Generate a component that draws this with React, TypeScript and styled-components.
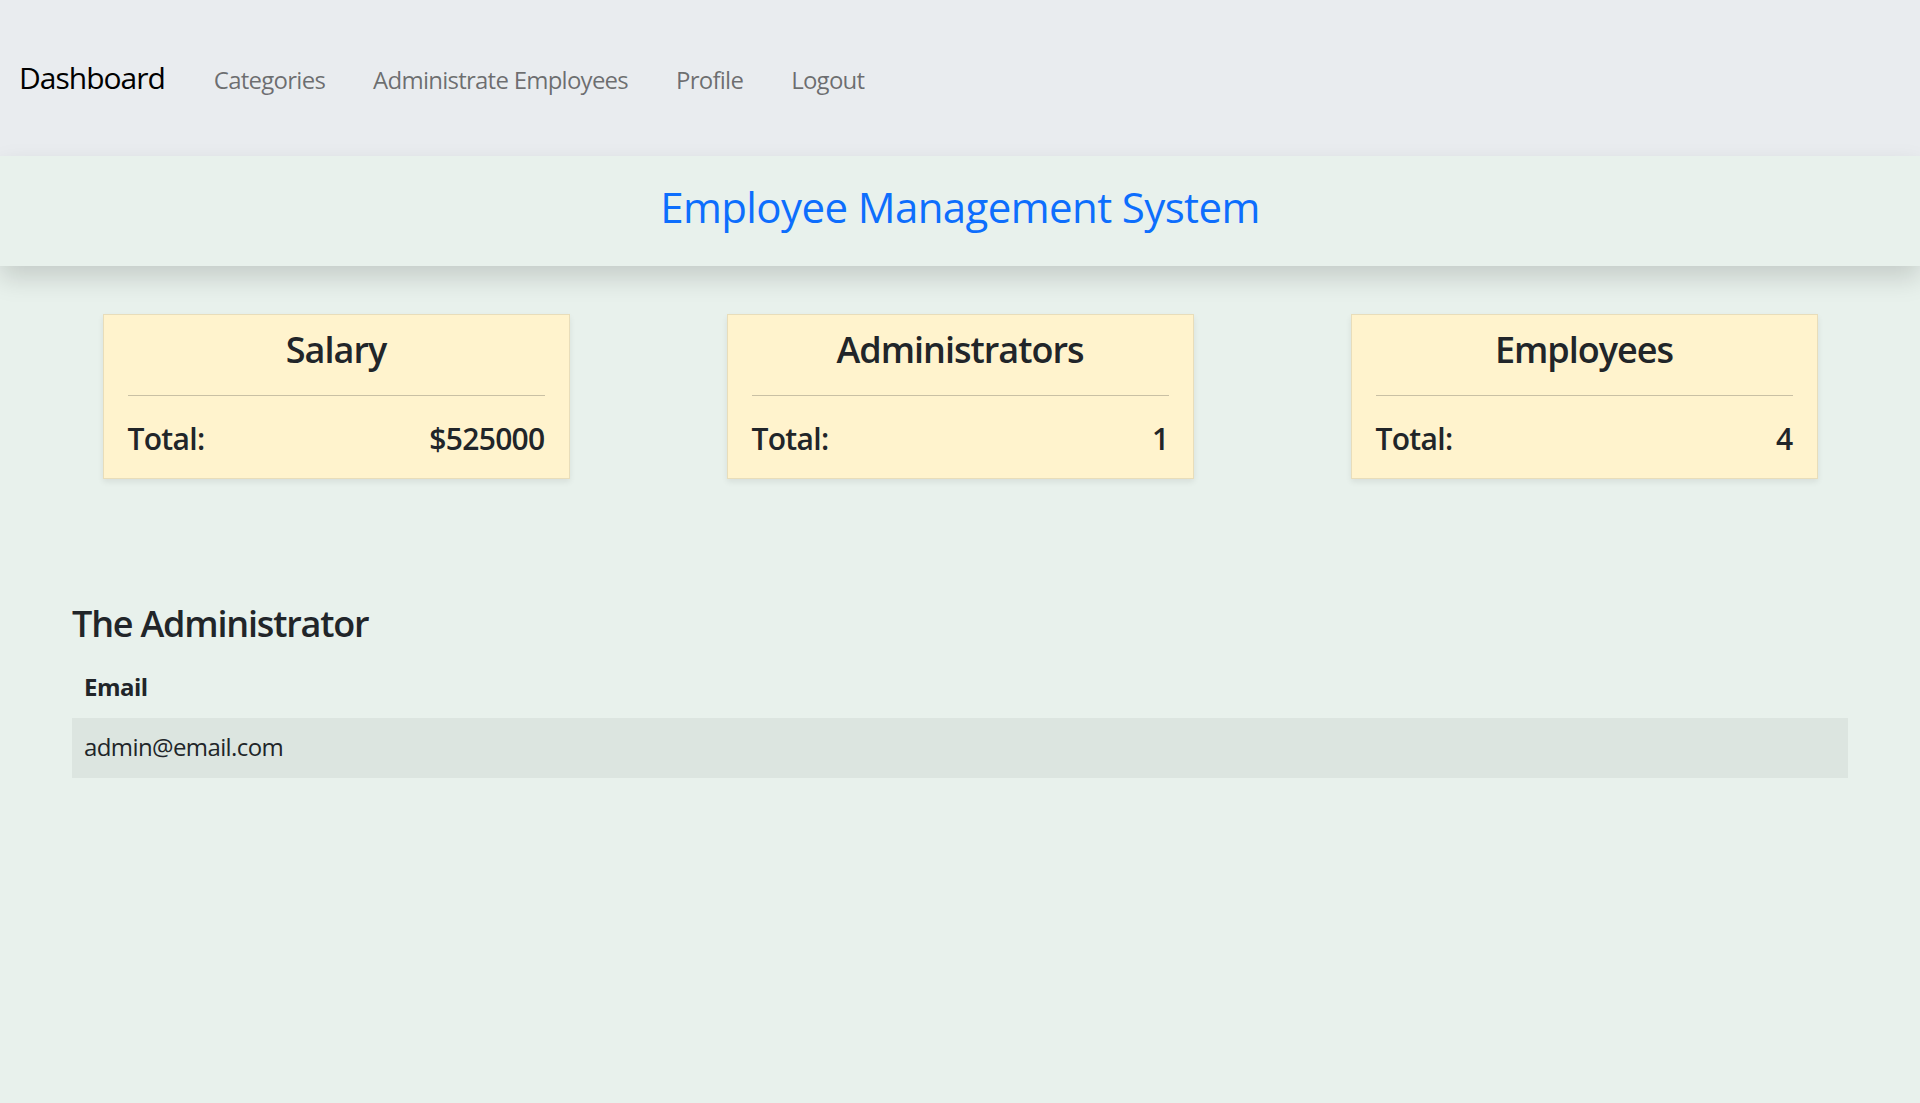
import React from 'react';
import styled, { createGlobalStyle } from 'styled-components';

const GlobalStyle = createGlobalStyle`
  * { box-sizing: border-box; }
  html, body { margin: 0; padding: 0; }
  body {
    background: #e8f1ec;
    font-family: "Open Sans", "Noto Sans", sans-serif;
    color: #212529;
    min-height: 100vh;
  }
`;

const NavBar = styled.nav`
  height: 156px;
  background: #e9ecef;
  display: flex;
  align-items: center;
  padding: 1px 19px 0;
`;

const NavList = styled.div`
  display: flex;
  align-items: baseline;
  gap: 48px;
`;

const Brand = styled.a`
  font-size: 30px;
  line-height: 36px;
  letter-spacing: -1px;
  color: #000;
  text-decoration: none;
  margin-right: 1px;
`;

const NavLink = styled.a`
  font-size: 24px;
  line-height: 36px;
  letter-spacing: -0.75px;
  color: rgba(0, 0, 0, 0.55);
  text-decoration: none;
`;

const Hero = styled.header`
  position: relative;
  z-index: 1;
  height: 110px;
  background: #e8f1ec;
  box-shadow: 0 12px 24px rgba(0, 0, 0, 0.15);
  display: flex;
  justify-content: center;
  align-items: flex-start;
  padding-top: 26px;
`;

const Title = styled.h1`
  margin: 0;
  font-size: 42px;
  line-height: 50px;
  font-weight: 500;
  letter-spacing: -0.6px;
  color: #0d6efd;
`;

const CardRow = styled.section`
  display: flex;
  justify-content: space-around;
  padding: 0 24px;
  margin-top: 48px;
`;

const Card = styled.div`
  width: 467px;
  background: #fff3cd;
  border: 1px solid rgba(0, 0, 0, 0.09);
  box-shadow: 0 3px 6px rgba(0, 0, 0, 0.075);
  padding: 13px 24px 21px;
  display: flex;
  flex-direction: column;
`;

const CardTitle = styled.h4`
  margin: 0;
  text-align: center;
  font-size: 36px;
  line-height: 44px;
  font-weight: 550;
  letter-spacing: -1px;
`;

const Rule = styled.hr`
  margin: 23px 0 25px;
  border: 0;
  border-top: 1px solid #c9c0a4;
  height: 0;
`;

const TotalRow = styled.div`
  display: flex;
  justify-content: space-between;
  font-size: 30px;
  line-height: 36px;
  font-weight: 550;
  letter-spacing: -0.7px;
`;

const AdminSection = styled.section`
  padding: 0 72px;
  margin-top: 123px;
`;

const SectionTitle = styled.h3`
  margin: 0 0 12px;
  font-size: 36px;
  line-height: 43px;
  font-weight: 550;
  letter-spacing: -1.2px;
`;

const Table = styled.table`
  width: 100%;
  border-collapse: collapse;
  font-size: 24px;
  line-height: 36px;
`;

const HeadCell = styled.th`
  text-align: left;
  font-weight: 700;
  letter-spacing: -0.5px;
  padding: 12px;
  border-bottom: 1px solid transparent;
`;

const BodyRow = styled.tr<{ $striped?: boolean }>`
  background: ${(p) => (p.$striped ? '#dce5e0' : 'transparent')};
`;

const BodyCell = styled.td`
  padding: 11px 12px 12px;
  letter-spacing: -0.6px;
  border-bottom: 1px solid transparent;
`;

const stats = [
  { title: 'Salary', value: '$525000' },
  { title: 'Administrators', value: '1' },
  { title: 'Employees', value: '4' },
];

const admins = ['admin@email.com'];

export default function App() {
  return (
    <>
      <GlobalStyle />
      <NavBar>
        <NavList>
          <Brand href="#">Dashboard</Brand>
          <NavLink href="#">Categories</NavLink>
          <NavLink href="#">Administrate Employees</NavLink>
          <NavLink href="#">Profile</NavLink>
          <NavLink href="#">Logout</NavLink>
        </NavList>
      </NavBar>
      <Hero>
        <Title>Employee Management System</Title>
      </Hero>
      <CardRow>
        {stats.map((s) => (
          <Card key={s.title}>
            <CardTitle>{s.title}</CardTitle>
            <Rule />
            <TotalRow>
              <span>Total:</span>
              <span>{s.value}</span>
            </TotalRow>
          </Card>
        ))}
      </CardRow>
      <AdminSection>
        <SectionTitle>The Administrator</SectionTitle>
        <Table>
          <thead>
            <tr>
              <HeadCell>Email</HeadCell>
            </tr>
          </thead>
          <tbody>
            {admins.map((a, i) => (
              <BodyRow key={a} $striped={i % 2 === 0}>
                <BodyCell>{a}</BodyCell>
              </BodyRow>
            ))}
          </tbody>
        </Table>
      </AdminSection>
    </>
  );
}
